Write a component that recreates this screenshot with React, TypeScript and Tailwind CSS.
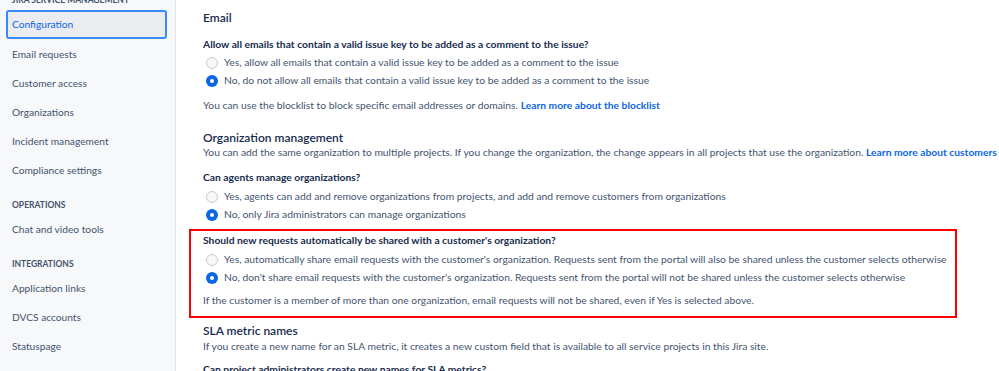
import React from "react";

const font = { fontFamily: 'Lato, "Open Sans", sans-serif' };

function Radio({ checked, label }: { checked?: boolean; label: string }) {
  return (
    <div className="flex h-[18px] items-center gap-[6px] pl-[3px]">
      {checked ? (
        <span className="flex h-[12px] w-[12px] shrink-0 items-center justify-center rounded-full bg-[#0c66e4]">
          <span className="h-[4px] w-[4px] rounded-full bg-white" />
        </span>
      ) : (
        <span className="h-[12px] w-[12px] shrink-0 rounded-full border border-[#c8ccd3] bg-[#f7f8f9]" />
      )}
      <span className="whitespace-nowrap text-[10.3px] text-[#44546f]">{label}</span>
    </div>
  );
}

const navTop = ["Email requests", "Customer access", "Organizations", "Incident management", "Compliance settings"];

function NavItem({ label }: { label: string }) {
  return <div className="flex h-[29px] items-center pl-[12px] pt-[2px] text-[10.2px] text-[#44546f]">{label}</div>;
}

function NavHeader({ label }: { label: string }) {
  return (
    <div className="h-[30px] pl-[12px] pt-[16px] text-[8.5px] font-bold uppercase leading-[10px] text-[#44546f]">
      {label}
    </div>
  );
}

export default function App() {
  return (
    <div className="flex h-[371px] w-[999px] overflow-hidden bg-white" style={font}>
      <aside className="w-[176px] shrink-0 border-r border-[#e4e6ea] bg-[#f7f8f9]">
        <div className="-mt-[6px] flex h-[12px] items-center pl-[12px] text-[8.5px] font-bold uppercase text-[#44546f]">
          Jira Service Management
        </div>
        <div className="mx-[6px] mt-[4px] flex h-[29px] w-[161px] items-center rounded-[3px] border-2 border-[#388bff] bg-[#ebecf0] pl-[4px] text-[10.2px] text-[#0c66e4]">
          Configuration
        </div>
        {navTop.map((n) => (
          <NavItem key={n} label={n} />
        ))}
        <NavHeader label="Operations" />
        <NavItem label="Chat and video tools" />
        <NavHeader label="Integrations" />
        <NavItem label="Application links" />
        <NavItem label="DVCS accounts" />
        <NavItem label="Statuspage" />
      </aside>

      <main className="min-w-0 flex-1 pl-[27px] text-[#44546f]">
        <h2 className="pt-[9px] text-[12px] font-semibold leading-[18px] text-[#172b4d]">Email</h2>
        <p className="mt-[8px] text-[10.3px] font-bold leading-[18px] text-[#172b4d]">
          Allow all emails that contain a valid issue key to be added as a comment to the issue?
        </p>
        <div className="mt-[1px]">
          <Radio label="Yes, allow all emails that contain a valid issue key to be added as a comment to the issue" />
          <Radio checked label="No, do not allow all emails that contain a valid issue key to be added as a comment to the issue" />
        </div>
        <p className="mt-[6px] whitespace-nowrap text-[10.3px] leading-[18px]">
          You can use the blocklist to block specific email addresses or domains.{" "}
          <a className="font-bold text-[#0c66e4]">Learn more about the blocklist</a>
        </p>

        <h2 className="mt-[16px] text-[12px] font-semibold leading-[16px] text-[#172b4d]">Organization management</h2>
        <p className="-mt-[1px] whitespace-nowrap text-[10.3px] leading-[14px]">
          You can add the same organization to multiple projects. If you change the organization, the change appears in all
          projects that use the organization.{" "}
          <a className="font-bold text-[#0c66e4]">Learn more about customers</a>
        </p>
        <p className="mt-[9px] text-[10.3px] font-bold leading-[18px] text-[#172b4d]">Can agents manage organizations?</p>
        <div className="mt-[2px]">
          <Radio label="Yes, agents can add and remove organizations from projects, and add and remove customers from organizations" />
          <Radio checked label="No, only Jira administrators can manage organizations" />
        </div>

        <div className="-ml-[14px] mt-[5px] w-[768px] border-2 border-[#ff0000] pb-[7px] pl-[12px]">
          <p className="text-[10.3px] font-bold leading-[18px] text-[#172b4d]">
            Should new requests automatically be shared with a customer's organization?
          </p>
          <div className="mt-[2px]">
            <Radio label="Yes, automatically share email requests with the customer's organization. Requests sent from the portal will also be shared unless the customer selects otherwise" />
            <Radio checked label="No, don't share email requests with the customer's organization. Requests sent from the portal will not be shared unless the customer selects otherwise" />
          </div>
          <p className="mt-[4px] whitespace-nowrap text-[10.3px] leading-[18px]">
            If the customer is a member of more than one organization, email requests will not be shared, even if Yes is selected
            above.
          </p>
        </div>

        <h2 className="mt-[5px] text-[12px] font-semibold leading-[16px] text-[#172b4d]">SLA metric names</h2>
        <p className="whitespace-nowrap text-[10.3px] leading-[14px]">
          If you create a new name for an SLA metric, it creates a new custom field that is available to all service projects in
          this Jira site.
        </p>
        <p className="mt-[7px] text-[10.3px] font-bold leading-[18px] text-[#172b4d]">
          Can project administrators create new names for SLA metrics?
        </p>
      </main>
    </div>
  );
}
